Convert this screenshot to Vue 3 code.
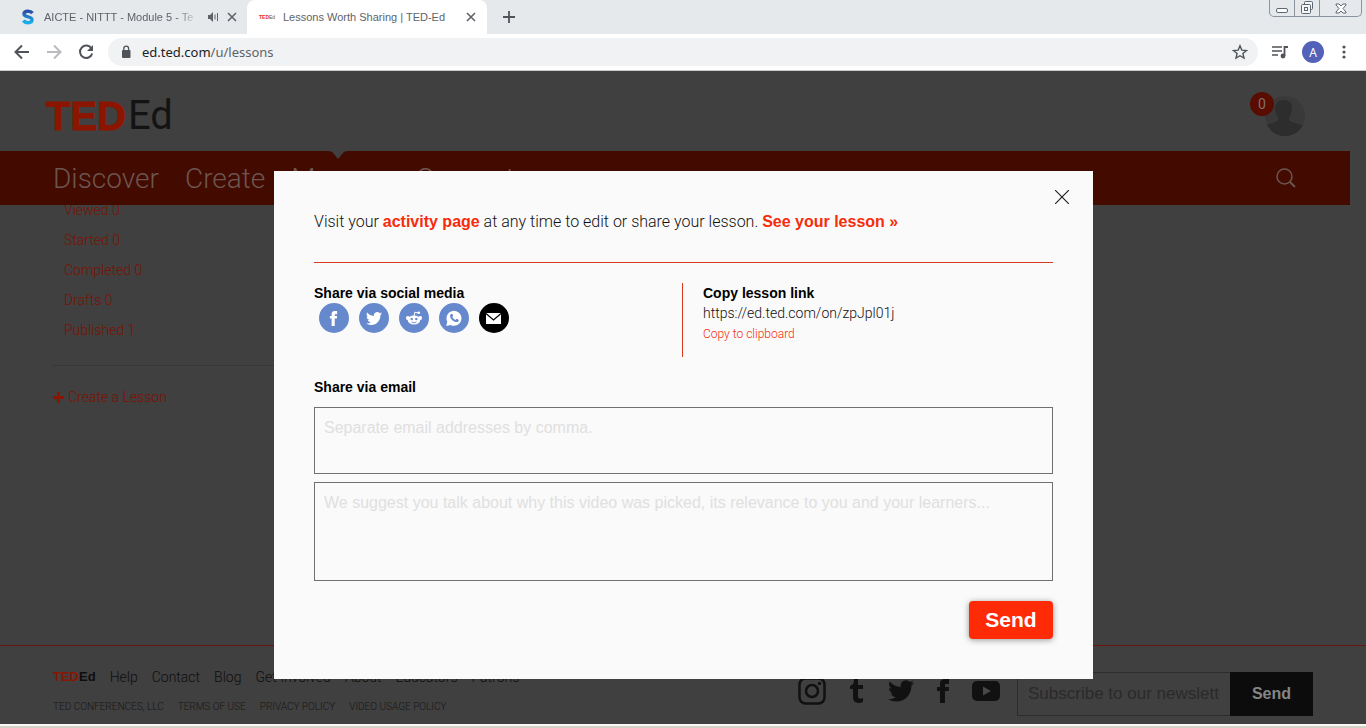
<script setup>
import { ref } from 'vue'

const mainLinks = ['Discover', 'Create', 'Manage', 'Support']
const filters = ['Viewed 0', 'Started 0', 'Completed 0', 'Drafts 0', 'Published 1']
const footerLinks = ['Help', 'Contact', 'Blog', 'Get Involved', 'About', 'Educators', 'Patrons']
const legalLinks = ['TED CONFERENCES, LLC', 'TERMS OF USE', 'PRIVACY POLICY', 'VIDEO USAGE POLICY']
const emails = ref('')
const message = ref('')
const subscriber = ref('')
const address = ref('ed.ted.com/u/lessons')
const birdPath = 'M23.953 4.57a10 10 0 01-2.825.775 4.958 4.958 0 002.163-2.723c-.951.555-2.005.959-3.127 1.184a4.92 4.92 0 00-8.384 4.482C7.69 8.095 4.067 6.13 1.64 3.162a4.822 4.822 0 00-.666 2.475c0 1.71.87 3.213 2.188 4.096a4.904 4.904 0 01-2.228-.616v.06a4.923 4.923 0 003.946 4.827 4.996 4.996 0 01-2.212.085 4.936 4.936 0 004.604 3.417 9.867 9.867 0 01-6.102 2.105c-.39 0-.779-.023-1.17-.067a13.995 13.995 0 007.557 2.209c9.053 0 13.998-7.496 13.998-13.985 0-.21 0-.42-.015-.63A9.935 9.935 0 0024 4.59z'
const fPath = 'M9 8H6v4h3v12h5V12h3.642L18 8h-4V6.333C14 5.378 14.192 5 15.115 5H18V0h-3.808C10.596 0 9 1.583 9 4.615z'
</script>

<template>
  <div class="window">
    <header class="browser">
      <div class="tabs">
        <div class="tab">
          <svg class="fav" viewBox="0 0 16 16" width="16" height="16" aria-hidden="true">
            <defs>
              <linearGradient id="sg" x1="0" y1="0" x2="0" y2="1">
                <stop offset="0" stop-color="#2a4fa8" /><stop offset="1" stop-color="#1cb0ea" />
              </linearGradient>
            </defs>
            <path d="M12.500 4.200C11.400 2.900 9.800 2.300 8 2.300 5.700 2.300 4 3.400 4 5.100 4 9 12 6.700 12 10.800 12 12.700 10.200 13.700 8 13.700 6 13.700 4.400 13 3.300 11.600" fill="none" stroke="url(#sg)" stroke-width="3.400" />
          </svg>
          <span class="title fade">AICTE - NITTT - Module 5 - Te</span>
          <svg class="sound" viewBox="0 0 12 12" width="12" height="12" aria-hidden="true"><path d="M1 4h2l3-3v10L3 8H1z" fill="#5f6368" /><path d="M8 3.500v5M10.500 2v8" stroke="#5f6368" fill="none" /></svg>
          <button class="icon" aria-label="Close tab"><svg viewBox="0 0 10 10" width="10" height="10"><path d="M1 1l8 8M9 1L1 9" stroke="#5f6368" stroke-width="1.600" /></svg></button>
        </div>
        <div class="tab active">
          <span class="mini"><b>TED</b>Ed</span>
          <span class="title">Lessons Worth Sharing | TED-Ed</span>
          <button class="icon" aria-label="Close tab"><svg viewBox="0 0 10 10" width="10" height="10"><path d="M1 1l8 8M9 1L1 9" stroke="#5f6368" stroke-width="1.600" /></svg></button>
        </div>
        <button class="icon newtab" aria-label="New tab"><svg viewBox="0 0 12 12" width="12" height="12"><path d="M6 0v12M0 6h12" stroke="#505458" stroke-width="1.800" /></svg></button>
        <div class="controls">
          <button aria-label="Minimize"><svg viewBox="0 0 14 14" width="14" height="14"><rect x="1.500" y="7.500" width="11" height="4" rx="1.500" fill="#fff" stroke="#5d6773" /></svg></button>
          <button aria-label="Restore"><svg viewBox="0 0 14 14" width="14" height="14"><g fill="#f4f6f8" stroke="#5d6773"><rect x="4.500" y=".5" width="8" height="8" rx="1" /><rect x="1.500" y="3.500" width="9" height="9" rx="1" /><rect x="4.500" y="6.500" width="3" height="3" /></g></svg></button>
          <button class="wide" aria-label="Close"><svg viewBox="0 0 14 14" width="14" height="14"><path d="M2 3h3l2 2 2-2h3v1L9 7.500l3 3.500v1H9l-2-2-2 2H2v-1l3-3.500L2 4z" fill="#fff" stroke="#5d6773" /></svg></button>
        </div>
      </div>
      <div class="toolbar">
        <button class="icon" aria-label="Back"><svg viewBox="0 0 16 16" width="16" height="16"><path d="M15 8H2M8 1.500L1.500 8 8 14.500" fill="none" stroke="#505458" stroke-width="2" /></svg></button>
        <button class="icon" aria-label="Forward"><svg viewBox="0 0 16 16" width="16" height="16"><path d="M1 8h13M8 1.500L14.500 8 8 14.500" fill="none" stroke="#b9bbbe" stroke-width="2" /></svg></button>
        <button class="icon" aria-label="Reload"><svg viewBox="0 0 16 16" width="16" height="16"><path d="M13.500 4.500A6.200 6.200 0 1 0 14.200 9.500" fill="none" stroke="#505458" stroke-width="2" /><path d="M15 1v6H9z" fill="#505458" /></svg></button>
        <div class="omnibox">
          <svg viewBox="0 0 10 14" width="10" height="14" aria-hidden="true"><rect x="1" y="5" width="8.500" height="8" rx="1" fill="#505458" /><path d="M2.800 5.500V3.500a2.400 2.400 0 0 1 4.800 0v2" fill="none" stroke="#505458" stroke-width="1.300" /></svg>
          <p class="url" :aria-label="address">ed.ted.com<span>/u/lessons</span></p>
          <button class="icon" aria-label="Bookmark"><svg viewBox="0 0 16 16" width="16" height="16"><path d="M8 1.800l1.800 4.300 4.700.4-3.600 3 1.100 4.600L8 11.700l-4 2.400 1.100-4.600-3.600-3 4.700-.4z" fill="none" stroke="#505458" stroke-width="1.400" /></svg></button>
        </div>
        <button class="icon" aria-label="Media"><svg viewBox="0 0 16 14" width="16" height="14"><path d="M0 2h10M0 6h10M0 10h6" stroke="#505458" stroke-width="1.700" /><path d="M12.500 11V2H16" fill="none" stroke="#505458" stroke-width="1.800" /><circle cx="11" cy="11" r="2.400" fill="#505458" /></svg></button>
        <button class="profile" aria-label="Profile A">A</button>
        <button class="icon" aria-label="Menu"><svg viewBox="0 0 4 14" width="4" height="14"><g fill="#505458"><circle cx="2" cy="2" r="1.600" /><circle cx="2" cy="7" r="1.600" /><circle cx="2" cy="12" r="1.600" /></g></svg></button>
      </div>
    </header>

    <main class="page">
      <div class="masthead">
        <a href="#" class="logo"><b>TED</b><span>Ed</span></a>
        <div class="account">
          <svg viewBox="0 0 40 40" width="40" height="40" aria-hidden="true">
            <clipPath id="av"><circle cx="20" cy="20" r="20" /></clipPath>
            <g clip-path="url(#av)"><rect width="40" height="40" fill="#393939" /><path d="M0 30c4-3 11-3 13-6v-3c-2-2-3-5-3-9 0-5 4-8 9-8 5 0 8 3 8 8 0 4-1 7-3 9v3c2 3 9 3 15 6v10H0z" fill="#2d2d2d" /></g>
          </svg>
          <span class="badge">0</span>
        </div>
      </div>
      <nav class="nav">
        <svg class="notch" viewBox="0 0 20 8" width="20" height="8" aria-hidden="true"><path d="M0 0q4 0 6 3l3 4q1 1 2 0l3-4q2-3 6-3z" fill="#404040" /></svg>
        <a v-for="l in mainLinks" :key="l" href="#">{{ l }}</a>
        <button class="icon search" aria-label="Search"><svg viewBox="0 0 20 20" width="20" height="20"><circle cx="8.500" cy="8.500" r="7.500" fill="none" stroke="#6c5550" stroke-width="1.500" /><path d="M14 14l5 5" stroke="#6c5550" stroke-width="2" /></svg></button>
      </nav>
      <aside class="side">
        <ul>
          <li v-for="f in filters" :key="f"><a href="#">{{ f }}</a></li>
        </ul>
        <a href="#" class="create"><svg viewBox="0 0 11 11" width="11" height="11" aria-hidden="true"><path d="M5.500 0v11M0 5.500h11" stroke="#8c1500" stroke-width="3" /></svg>Create a Lesson</a>
      </aside>
      <footer class="footer">
        <div class="links">
          <div class="row">
            <a href="#" class="small-logo"><b>TED</b><span>Ed</span></a>
            <a v-for="l in footerLinks" :key="l" href="#">{{ l }}</a>
          </div>
          <div class="row legal"><a v-for="l in legalLinks" :key="l" href="#">{{ l }}</a></div>
        </div>
        <div class="social">
          <a href="#" aria-label="Instagram"><svg viewBox="0 0 28 28" width="28" height="28"><rect x="1.500" y="1.500" width="25" height="25" rx="6" fill="none" stroke="#111" stroke-width="2.500" /><circle cx="14" cy="14" r="6" fill="none" stroke="#111" stroke-width="2.500" /><circle cx="21.500" cy="6.500" r="1.700" fill="#111" /></svg></a>
          <a href="#" aria-label="Tumblr"><svg viewBox="0 0 16 24" width="16" height="24"><path d="M5 0h4v6h5v4H9v7c0 3 2 3 5 2v4c-5 2-10 1-10-5v-8H1V7c3-1 4-3 4-7z" fill="#111" /></svg></a>
          <a href="#" aria-label="Twitter"><svg viewBox="0 0 24 24" width="26" height="26"><path :d="birdPath" fill="#111" /></svg></a>
          <a href="#" aria-label="Facebook"><svg viewBox="6 0 12 24" width="12" height="24"><path :d="fPath" fill="#111" /></svg></a>
          <a href="#" aria-label="YouTube"><svg viewBox="0 0 28 22" width="28" height="22"><rect y="1" width="28" height="20" rx="5" fill="#111" /><path d="M11 6.500v9l8-4.500z" fill="#484848" /></svg></a>
        </div>
        <form class="subscribe" @submit.prevent>
          <input v-model="subscriber" type="email" aria-label="Subscribe to our newsletter" placeholder="Subscribe to our newsletter">
          <button>Send</button>
        </form>
      </footer>

      <section class="modal" role="dialog" aria-label="Share your lesson">
        <button class="icon close" aria-label="Close"><svg viewBox="0 0 14 14" width="14" height="14"><path d="M0 0l14 14M14 0L0 14" stroke="#222" stroke-width="1.200" /></svg></button>
        <p class="intro">Visit your <a href="#">activity page</a> at any time to edit or share your lesson. <a href="#">See your lesson »</a></p>
        <div class="share">
          <div>
            <h2>Share via social media</h2>
            <div class="circles">
              <a href="#" aria-label="Facebook"><svg viewBox="0 0 30 30" width="30" height="30"><circle cx="15" cy="15" r="15" fill="#6688cc" /><svg x="10.500" y="8" width="8" height="15" viewBox="6 0 12 24"><path :d="fPath" fill="#fff" /></svg></svg></a>
              <a href="#" aria-label="Twitter"><svg viewBox="0 0 30 30" width="30" height="30"><circle cx="15" cy="15" r="15" fill="#6688cc" /><svg x="7" y="7" width="16" height="17" viewBox="0 0 24 24"><path :d="birdPath" fill="#fff" /></svg></svg></a>
              <a href="#" aria-label="Reddit"><svg viewBox="0 0 30 30" width="30" height="30"><circle cx="15" cy="15" r="15" fill="#6688cc" /><ellipse cx="15" cy="17" rx="6.300" ry="4.600" fill="#fff" /><circle cx="8.800" cy="15" r="1.900" fill="#fff" /><circle cx="21.200" cy="15" r="1.900" fill="#fff" /><path d="M15 13l.8-3.800 3.400.8" fill="none" stroke="#fff" /><circle cx="19.800" cy="9.800" r="1.300" fill="#fff" /><circle cx="12.700" cy="16" r="1.200" fill="#6688cc" /><circle cx="17.300" cy="16" r="1.200" fill="#6688cc" /><path d="M12.500 19q2.500 1.600 5 0" fill="none" stroke="#6688cc" stroke-width=".9" /></svg></a>
              <a href="#" aria-label="WhatsApp"><svg viewBox="0 0 30 30" width="30" height="30"><circle cx="15" cy="15" r="15" fill="#6688cc" /><path d="M7.200 23l1.100-4.200A7.500 7.500 0 1 1 11.500 22z" fill="#fff" /><path d="M11.800 11.200c.8-.9 1.500-.6 1.700 0l.6 1.400c.2.500-.5 1-.8 1.400.8 1.500 1.800 2.300 3.200 2.900l1-1.200 2 1c.5.400 0 1.700-.7 2.100-2.300 1.300-7.800-2.200-7.700-6.100 0-.6.300-1.200.7-1.500z" fill="#6688cc" /></svg></a>
              <a href="#" aria-label="Email"><svg viewBox="0 0 30 30" width="30" height="30"><circle cx="15" cy="15" r="15" fill="#000" /><rect x="7" y="10" width="15" height="11" fill="#fff" /><path d="M7 10.500l7.500 6.500 7.500-6.500" fill="none" stroke="#000" stroke-width="1.200" /></svg></a>
            </div>
          </div>
          <div class="copy">
            <h2>Copy lesson link</h2>
            <p>https://ed.ted.com/on/zpJpl01j</p>
            <button>Copy to clipboard</button>
          </div>
        </div>
        <form @submit.prevent>
          <h2><label for="emails">Share via email</label></h2>
          <textarea id="emails" v-model="emails" class="emails" placeholder="Separate email addresses by comma."></textarea>
          <textarea v-model="message" class="message" aria-label="Message" placeholder="We suggest you talk about why this video was picked, its relevance to you and your learners..."></textarea>
          <button class="send">Send</button>
        </form>
      </section>
    </main>
    <div class="taskbar"></div>
  </div>
</template>

<style>
body { margin: 0; background: #404040; }
</style>

<style scoped>
* { box-sizing: border-box; }
.window { min-height: 100vh; display: flex; flex-direction: column; font-family: Roboto, "Liberation Sans", sans-serif; }
a { color: inherit; text-decoration: none; }
button { border: 0; padding: 0; background: none; font: inherit; color: inherit; }
svg { display: block; flex: none; }
h2, p, ul { margin: 0; padding: 0; }
.icon { display: flex; align-items: center; justify-content: center; }

.browser { background: #fff; font-family: "Noto Sans", sans-serif; border-bottom: 1px solid #c9cacb; }
.tabs { display: flex; height: 34px; background: #e6e9ec; color: #5f6368; font-family: "Liberation Sans", sans-serif; font-size: 11px; }
.tab { display: flex; align-items: center; width: 247px; padding: 0 10px 0 20px; gap: 8px; }
.tab.active { width: 240px; padding: 0 11px 0 12px; background: #fff; border-radius: 8px 8px 0 0; }
.title { flex: 1; white-space: nowrap; overflow: hidden; }
.fade { -webkit-mask-image: linear-gradient(to right, #000 85%, transparent); mask-image: linear-gradient(to right, #000 85%, transparent); }
.mini { font: 5px "Liberation Sans", sans-serif; color: #555; width: 16px; }
.mini b { color: #e62b1e; }
.newtab { width: 44px; }
.controls { display: flex; align-self: flex-start; margin-left: auto; margin-right: 4px; border: 1px solid #8b949d; border-top: 0; border-radius: 0 0 5px 5px; }
.controls button { width: 25px; height: 16px; display: flex; align-items: center; justify-content: center; border-right: 1px solid #8b949d; }
.controls .wide { width: 41px; border-right: 0; }
.toolbar { display: flex; align-items: center; gap: 16px; height: 36px; padding: 0 20px 0 14px; }
.omnibox { flex: 1; display: flex; align-items: center; gap: 11px; height: 28px; padding: 0 10px 0 13px; margin: 0 -2px; border-radius: 14px; background: #f0f2f4; }
.url { flex: 1; font-size: 13px; color: #202124; }
.url span { color: #5f6368; }
.profile { width: 22px; height: 22px; margin-right: 2px; margin-left: -2px; border-radius: 50%; background: #5361b8; color: #fff; font-size: 12px; }

.page { flex: 1; position: relative; display: flex; flex-direction: column; background: #404040; }
.masthead { display: flex; align-items: center; justify-content: space-between; height: 80px; padding: 9px 61px 0 46px; }
.logo { display: flex; gap: 2px; font-size: 40px; line-height: 40px; color: #131313; }
.logo b { font-family: "Liberation Sans", sans-serif; color: #8c1500; -webkit-text-stroke: 1px #8c1500; }
.account { position: relative; }
.badge { position: absolute; left: -15px; top: -4px; width: 24px; height: 24px; border-radius: 50%; background: #590c00; color: #85706c; font-size: 14px; line-height: 24px; text-align: center; }
.nav { position: relative; z-index: 1; display: flex; align-items: center; gap: 26px; height: 54px; margin-right: 16px; padding: 0 54px 0 53px; background: #430a00; color: #6c5550; font-size: 28px; font-weight: 300; }
.notch { position: absolute; left: 328px; top: 0; }
.search { margin-left: auto; }
.side { flex: 1; width: 274px; padding-left: 53px; margin-top: -10px; font-size: 14px; font-weight: 300; color: #7e1000; }
.side ul { list-style: none; padding: 0 0 20px 11px; line-height: 30px; border-bottom: 1px solid #373737; }
.create { display: flex; align-items: center; gap: 4px; height: 62px; }
.footer { display: flex; align-items: flex-start; height: 79px; padding-right: 53px; border-top: 1px solid #6a1610; color: #0e0e0e; }
.links { flex: 1; padding: 21px 0 0 53px; }
.row { display: flex; gap: 14px; font-size: 14px; line-height: 20px; font-weight: 300; }
.legal { margin-top: 10px; font-size: 10px; color: #161616; }
.small-logo { font-family: "Liberation Sans", sans-serif; font-size: 13px; font-weight: 700; }
.small-logo b { color: #8c1500; }
.social { display: flex; align-items: center; gap: 23px; height: 90px; margin-right: 17px; }
.subscribe { display: flex; height: 44px; margin-top: 26px; }
.subscribe input { width: 213px; padding: 0 10px; border: 1px solid #2d2d2d; border-right: 0; border-radius: 0; background: transparent; font: 17px "Liberation Sans", sans-serif; color: #222; }
.subscribe input::placeholder { color: #2a2a2a; }
.subscribe button { width: 83px; background: #0c0c0c; color: #858585; font: bold 16px "Liberation Sans", sans-serif; }

.modal { position: absolute; z-index: 2; top: 100px; left: 274px; right: 273px; padding: 40px; background: #fafafa; color: #111; }
.close { position: absolute; right: 24px; top: 19px; }
.intro { height: 52px; border-bottom: 1px solid #d83a20; font-size: 16px; line-height: 22px; font-weight: 300; }
.intro a { font-family: "Liberation Sans", sans-serif; font-weight: 700; color: #f62c0c; }
h2 { font: bold 14px/20px "Liberation Sans", sans-serif; color: #000; }
.share { display: grid; grid-template-columns: 368px 1fr; height: 74px; margin: 20px 0; font-weight: 300; }
.circles { display: flex; gap: 10px; padding-left: 5px; }
.copy { padding-left: 20px; border-left: 1px solid #d83a20; font-size: 14px; line-height: 20px; }
.copy button { display: block; color: #f62c0c; font-size: 12px; font-weight: 300; line-height: 22px; }
form h2 { margin-bottom: 10px; }
textarea { display: block; width: 100%; padding: 9px; border: 1px solid #707070; border-radius: 0; background: transparent; resize: none; font: 16px/22px "Liberation Sans", sans-serif; color: #222; }
textarea::placeholder { color: #e0e0e0; }
.emails { height: 67px; margin-bottom: 8px; }
.message { height: 99px; }
.send { display: block; width: 84px; height: 38px; margin: 20px 0 0 auto; border-radius: 4px; background: #ff2b06; color: #fff; font: bold 21px "Liberation Sans", sans-serif; box-shadow: 0 1px 6px #0006; }
.taskbar { height: 4px; border-top: 2px solid #f8f7f4; background: #d4d0c8; }
</style>
